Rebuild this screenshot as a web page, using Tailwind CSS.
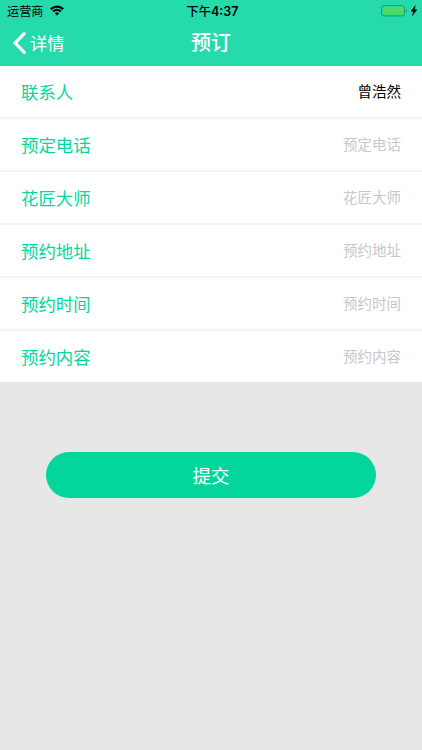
<!DOCTYPE html>
<html lang="zh-CN">
<head>
  <meta charset="UTF-8" />
  <meta name="viewport" content="width=device-width, initial-scale=1.0"/>
  <title>预订</title>
  <script src="https://cdn.jsdelivr.net/npm/@tailwindcss/browser@4"></script>
</head>
<body class="bg-[#e7e7e7] min-h-screen font-['Noto_Sans_CJK_SC',sans-serif]">
  <header class="bg-[#26dbab] h-[66px]">
    <!-- status bar -->
    <div class="grid grid-cols-3 items-center h-[22px] pl-[7px] pr-[5px] text-black">
      <div class="flex items-center gap-[6px]">
        <span class="text-[12.2px] leading-[20px] pb-[2px]">运营商</span>
        <svg class="w-[14px] h-[11px] mb-[2px]" viewBox="0 0 14 11" fill="none" stroke="#000" stroke-width="2.2">
          <path d="M0.8 4.1a8.8 8.8 0 0 1 12.4 0" />
          <path d="M3.1 6.5a5.5 5.5 0 0 1 7.8 0" />
          <path d="M7 10.6L4.8 8.4a3.1 3.1 0 0 1 4.4 0z" fill="#000" stroke="none" />
        </svg>
      </div>
      <div class="text-center text-[12.2px] leading-[22px] pl-[1px] font-medium whitespace-nowrap">下午<span class="font-[Inter] font-semibold text-[12.5px]">4:37</span></div>
      <div class="flex items-center justify-end gap-[3px] pb-[2px]">
        <svg class="w-[27px] h-[12px]" viewBox="0 0 27 12">
          <rect x="0.6" y="0.6" width="23" height="10.3" rx="2.4" fill="none" stroke="#149c78" stroke-width="1" />
          <rect x="1.8" y="1.8" width="20.6" height="7.9" rx="1.2" fill="#4cd964" />
          <path d="M24.8 3.9c1.6 .7 1.6 3.1 0 3.8z" fill="#149c78" />
        </svg>
        <svg class="w-[6px] h-[11px]" viewBox="0 0 6 11"><path d="M4.4 0.6L0 6.2h2.5L1.4 10.6 6 4.7H3.4z" fill="#000" stroke="#000" stroke-width="0.4" /></svg>
      </div>
    </div>
    <!-- nav bar -->
    <div class="grid grid-cols-3 items-center h-[42px] pl-[13px] pr-[13px] text-white">
      <a href="#" class="flex items-center gap-[4px]">
        <svg class="w-[13px] h-[22px]" viewBox="0 0 13 22" fill="none" stroke="#fff" stroke-width="3.2" stroke-linecap="round"><path d="M11.2 1.7L2.2 11l9 9.3" /></svg>
        <span class="text-[17.3px] leading-[42px]">详情</span>
      </a>
      <h1 class="text-center text-[20px] leading-[38px] pb-[2px] font-medium">预订</h1>
    </div>
  </header>

  <ul class="bg-white divide-y-2 divide-[#f4f4f4]">
    <li class="flex items-start justify-between h-[53px] pl-[21px] pr-[21px]">
      <span class="text-[17.4px] leading-[51px] text-[#04d69d]">联系人</span>
      <span class="text-[14.5px] leading-[49px] text-black">曾浩然</span>
    </li>
    <li class="flex items-start justify-between h-[53px] pl-[21px] pr-[21px]">
      <span class="text-[17.4px] leading-[51px] text-[#04d69d]">预定电话</span>
      <span class="text-[14.5px] leading-[49px] text-[#c7c7cc]">预定电话</span>
    </li>
    <li class="flex items-start justify-between h-[53px] pl-[21px] pr-[21px]">
      <span class="text-[17.4px] leading-[51px] text-[#04d69d]">花匠大师</span>
      <span class="text-[14.5px] leading-[49px] text-[#c7c7cc]">花匠大师</span>
    </li>
    <li class="flex items-start justify-between h-[53px] pl-[21px] pr-[21px]">
      <span class="text-[17.4px] leading-[51px] text-[#04d69d]">预约地址</span>
      <span class="text-[14.5px] leading-[49px] text-[#c7c7cc]">预约地址</span>
    </li>
    <li class="flex items-start justify-between h-[53px] pl-[21px] pr-[21px]">
      <span class="text-[17.4px] leading-[51px] text-[#04d69d]">预约时间</span>
      <span class="text-[14.5px] leading-[49px] text-[#c7c7cc]">预约时间</span>
    </li>
    <li class="flex items-start justify-between h-[51px] pl-[21px] pr-[21px]">
      <span class="text-[17.4px] leading-[51px] text-[#04d69d]">预约内容</span>
      <span class="text-[14.5px] leading-[49px] text-[#c7c7cc]">预约内容</span>
    </li>
  </ul>

  <div class="pt-[70px] px-[46px]">
    <button class="block w-full h-[46px] rounded-full bg-[#02d69c] text-white text-[18.5px] leading-[46px]">提交</button>
  </div>
</body>
</html>
